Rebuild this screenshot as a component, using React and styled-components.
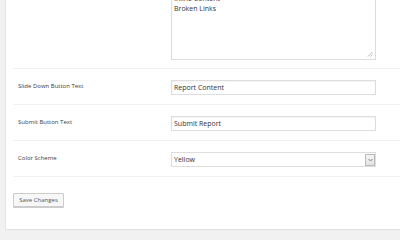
import React from "react";
import styled, { createGlobalStyle } from "styled-components";

const Global = createGlobalStyle`
  html, body {
    margin: 0;
    padding: 0;
    background: #f1f1f1;
    overflow: hidden;
  }
  body {
    font-family: "Open Sans", "Noto Sans", sans-serif;
    color: #333;
  }
`;

const Panel = styled.div`
  margin-left: 5px;
  margin-top: -16px;
  height: 246px;
  background: #fff;
  border-left: 1px solid #e6e6e6;
  border-bottom: 1px solid #e2e2e2;
  padding-left: 7px;
  box-sizing: border-box;
`;

const Row = styled.div`
  display: grid;
  grid-template-columns: 158px 205px;
  align-items: start;
  padding: ${(p) => (p.$first ? "0 0 8px" : "11px 0 9px")};
  border-bottom: 1px solid #f1f1f1;
`;

const Label = styled.div`
  font-size: 6px;
  line-height: 10px;
  padding-left: 5px;
  padding-top: 1px;
  color: #3a3a3a;
`;

const TextArea = styled.div`
  height: 76px;
  border: 1px solid #ddd;
  box-shadow: inset 0 1px 2px rgba(0, 0, 0, 0.05);
  font-size: 7px;
  line-height: 10px;
  padding: 9px 2px 0;
  box-sizing: border-box;
  position: relative;
  color: #333;
`;

const Grip = styled.svg`
  position: absolute;
  right: 2px;
  bottom: 2px;
`;

const Input = styled.div`
  height: 15px;
  border: 1px solid #ddd;
  box-shadow: inset 0 1px 2px rgba(0, 0, 0, 0.05);
  font-size: 7px;
  line-height: 13px;
  padding-left: 2px;
  box-sizing: border-box;
  color: #333;
`;

const Select = styled.div`
  height: 15px;
  border: 1px solid #ddd;
  display: flex;
  align-items: center;
  justify-content: space-between;
  font-size: 7px;
  padding-left: 2px;
  box-sizing: border-box;
  color: #333;
`;

const Arrow = styled.div`
  width: 10px;
  height: 12px;
  border: 1px solid #bbb;
  box-sizing: border-box;
  background: linear-gradient(#f4f4f4, #e2e2e2);
  display: flex;
  align-items: center;
  justify-content: center;
`;

const Footer = styled.div`
  display: flex;
  padding: 16px 0 0;
`;

const Button = styled.button`
  font-family: inherit;
  font-size: 6px;
  height: 14px;
  width: 51px;
  padding: 0;
  color: #555;
  background: #f7f7f7;
  border: 1px solid #ccc;
  box-shadow: 0 1px 0 #ccc;
  border-radius: 1px;
`;

export default function App() {
  return (
    <>
      <Global />
      <Panel>
        <Row $first>
          <Label />
          <TextArea>
            Inline Content
            <br />
            Broken Links
            <Grip width="6" height="6" viewBox="0 0 6 6">
              <path d="M5.5 1 L1 5.5 M5.5 3.5 L3.5 5.5" stroke="#aaa" strokeWidth="0.8" />
            </Grip>
          </TextArea>
        </Row>
        <Row>
          <Label>Slide Down Button Text</Label>
          <Input>Report Content</Input>
        </Row>
        <Row>
          <Label>Submit Button Text</Label>
          <Input>Submit Report</Input>
        </Row>
        <Row>
          <Label>Color Scheme</Label>
          <Select>
            Yellow
            <Arrow>
              <svg width="5" height="4" viewBox="0 0 5 4">
                <path d="M0.5 1 L2.5 3 L4.5 1" fill="none" stroke="#777" strokeWidth="0.9" />
              </svg>
            </Arrow>
          </Select>
        </Row>
        <Footer>
          <Button>Save Changes</Button>
        </Footer>
      </Panel>
    </>
  );
}
